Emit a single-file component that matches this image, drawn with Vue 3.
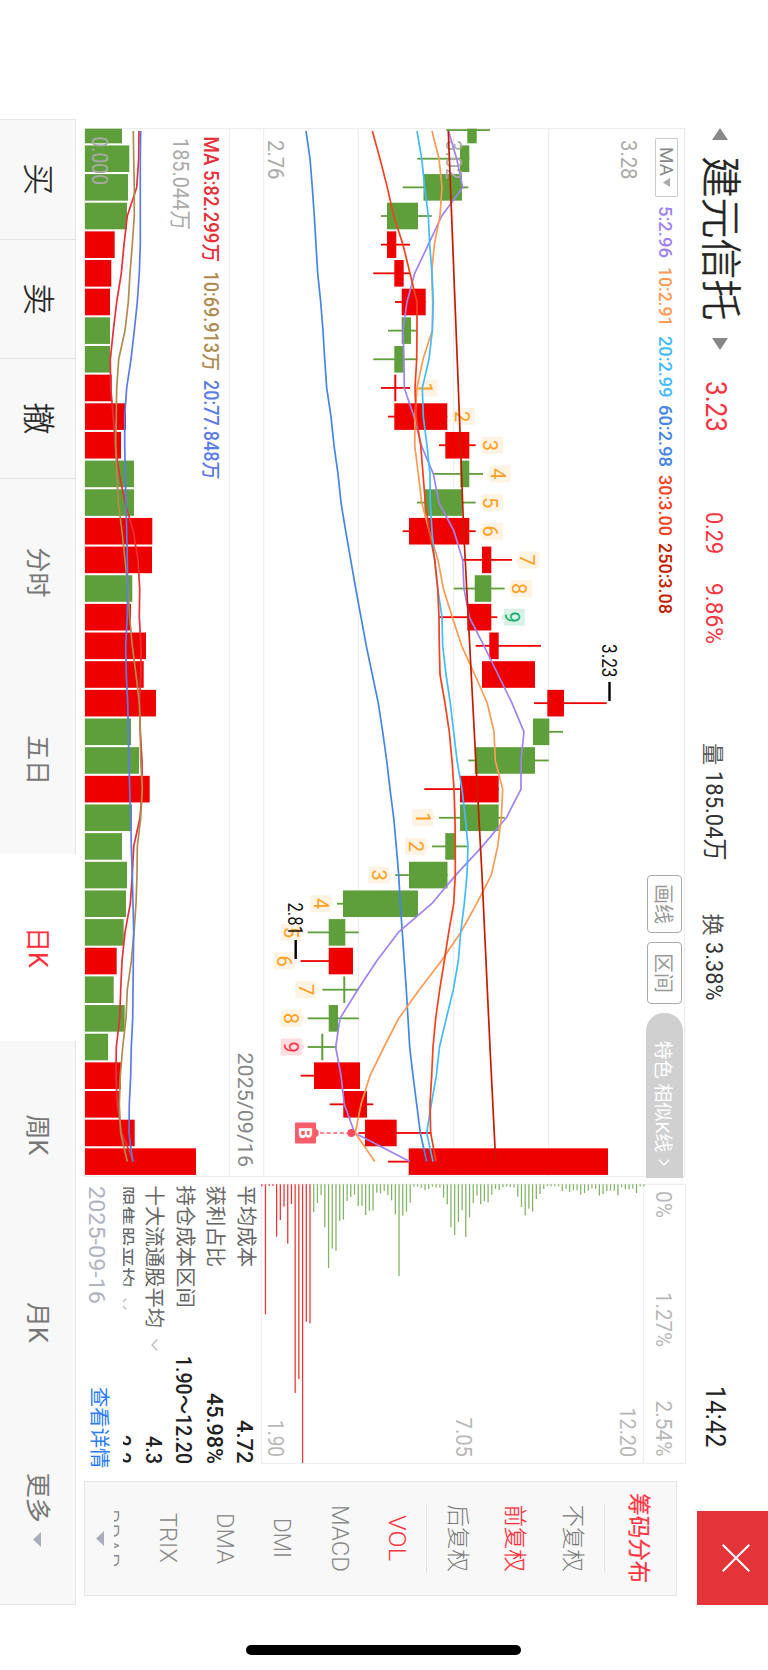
<script setup>
import { h } from 'vue'

// Text squeezed to an exact width; the svg's bottom edge is the text baseline.
const Fit = (p) => {
  const cap = Math.round(p.s * 0.711 * 10) / 10
  return h('svg', { width: p.w, height: cap, class: 'fit', style: { overflow: 'visible', display: 'block', flex: 'none' } }, [
    h('text', {
      x: -1, y: cap, textLength: +p.w + 2, lengthAdjust: 'spacingAndGlyphs',
      'font-size': p.s, 'font-weight': p.b || 400, fill: p.c || '#333',
    }, p.t),
  ])
}
Fit.props = ['t', 'w', 's', 'c', 'b']

const H = 768
const RED = '#ee0000'
const GREEN = '#5f9f3b'
const at = (i) => 130.05 + 28.655 * i

// [colour, low, body bottom, body top, high, volume top]
const raw = [
  ['g', 446.3, 467.3, 476.7, 490, 122], ['g', 417.3, 460, 469.3, 469.3, 129.3], ['g', 402.7, 423.5, 462, 468.3, 128],
  ['g', 381, 387, 418, 431.7, 127], ['r', 381, 387, 396.3, 410, 114.7], ['r', 373.3, 394.3, 403.7, 410, 111.3],
  ['r', 395, 401.7, 425.7, 425.7, 110], ['g', 388, 401.7, 411, 416.7, 110], ['g', 373.3, 394.3, 403.7, 416.7, 110],
  ['r', 381, 394.3, 396.3, 410, 111.7], ['r', 388, 394.3, 447.3, 447.3, 126], ['r', 439, 445.3, 469.3, 475.7, 121],
  ['g', 433, 460.3, 469.3, 483, 134], ['g', 417, 424.3, 462, 475.7, 134], ['r', 402.7, 409, 469.3, 475.7, 152.3],
  ['r', 462, 482, 491.3, 512, 152], ['g', 453.7, 474.7, 491.3, 504.7, 132.3], ['r', 439, 467.3, 491.3, 497.3, 131],
  ['r', 475.7, 489.3, 498.7, 541, 146], ['r', 482, 482, 535, 535, 143.7], ['r', 534, 547.3, 564, 606.7, 156],
  ['g', 533, 533, 549.3, 563, 131], ['g', 468.3, 474.7, 535, 548.7, 139], ['r', 424.3, 460, 498.7, 498.7, 149.7],
  ['g', 439, 460, 498.7, 504.7, 132], ['g', 432, 445.3, 455, 467.3, 122], ['g', 395.3, 409, 447.5, 447.5, 127],
  ['g', 337, 343, 418, 418, 126], ['g', 307.7, 328.7, 345.3, 358.7, 123.7], ['r', 300.7, 328.7, 353, 353, 116.7],
  ['g', 322.3, 343.3, 345.2, 358.7, 113.7], ['g', 307.7, 328.7, 338, 358.7, 124.7], ['g', 307.7, 321.3, 323.3, 336.7, 108],
  ['r', 300.7, 314, 360, 360, 121], ['r', 329.7, 343.3, 367, 373.3, 119.3], ['r', 358.5, 365, 396.7, 431.3, 134.7],
  ['r', 388, 408.7, 608, 608, 196],
]
const candles = raw.map(([k, lo, b0, b1, hi, v], i) => {
  const x0 = Math.max(at(i) - 13.3, 128.7)
  const x1 = at(i) + 13.3
  return { c: k === 'r' ? RED : GREEN, x: at(i), x0, w: x1 - x0, lo: H - lo, hi: H - hi, top: H - b1, bh: b1 - b0, vt: H - v, vh: v - 85 }
})

const poly = (vals) => vals.map((v, i) => `${(i ? at(i) : 131).toFixed(1)},${(H - v).toFixed(1)}`).join(' ')
const ma = [
  { c: '#4485e6', p: poly([306, 310, 312.3, 314.3, 316, 317.7, 320.7, 323, 324.7, 326.7, 331, 334, 338, 341, 345.7, 350.7, 355.7, 361, 366.3, 372.3, 378.3, 382.7, 386.7, 390, 393.7, 396.3, 398.7, 400.3, 402.3, 404.3, 406.3, 408, 409.7, 413, 416.7, 420.3, 426.7]) },
  { c: '#a182f2', p: poly([448.5, 456.7, 462.7, 441.7, 428.3, 414.7, 407, 403, 404, 404.3, 414, 421.3, 433.3, 439, 454, 462.7, 464, 469.3, 484, 498, 512, 524, 521, 521, 506.3, 482.3, 455.7, 431.7, 398.3, 376.7, 357.7, 340, 335.7, 341, 344.3, 354.7, 409.7]) },
  { c: '#ff9a55', p: poly([432, 439, 442, 440, 434.3, 431.7, 432.7, 432.3, 423, 417, 415, 414.7, 418.3, 421.7, 429.3, 438, 443.3, 452.3, 461.7, 474.7, 487.3, 494, 495.3, 502.7, 501.3, 497.7, 491.3, 476.7, 460.7, 441.3, 419.3, 398.7, 384, 370, 361, 355.3, 374.7]) },
  { c: '#42bbff', p: poly([417, 421.7, 424.7, 428.3, 429.7, 432, 433.3, 432.3, 429, 422.3, 423.3, 427, 430, 430.3, 432, 434.7, 437.7, 442, 442.7, 446, 450.3, 453.7, 457, 462, 465.3, 468, 467, 464.3, 460.7, 458.3, 453.3, 446.3, 439.5, 436.3, 431.3, 426.7, 433]) },
  { c: '#f2421f', p: poly([372.3, 380, 387.3, 393.7, 403, 410, 417, 417, 416.7, 415, 416, 420.7, 423, 425.3, 429.3, 434.7, 437.7, 439, 439.3, 440, 445, 449.3, 452, 454, 455, 455.3, 455.3, 453.7, 448.7, 444.3, 439.7, 435.7, 433, 431.7, 430, 430.7, 436]) },
  { c: '#c41c00', p: [[131, 448.3], [387, 458.3], [531, 463.7], [732, 474.3], [875, 482], [1047, 490], [1162, 495.7]].map(([x, v]) => `${x},${H - v}`).join(' ') },
]
const volMa = [
  { c: '#e6303a', p: poly([139, 138.7, 136.7, 127.3, 124, 121.3, 116.7, 113.3, 110.3, 110.7, 113.3, 115.3, 119.3, 125, 133.3, 138, 139.7, 139.3, 141, 140.7, 139.5, 140.3, 142, 142.3, 140, 133.7, 132.3, 130.3, 125, 122, 120.7, 119.7, 116.3, 116, 117.3, 121.7, 133.5]) },
  { c: '#b08b50', p: poly([133.3, 133.7, 134.3, 134.3, 132.3, 130, 128.3, 125, 118.7, 116.7, 116.3, 115.7, 116.7, 118.3, 122, 125, 128, 129.7, 132.3, 136, 139.3, 140.3, 140.7, 142.3, 140.7, 137.3, 137, 136, 134, 131.3, 127.3, 126, 122.7, 120.3, 119.3, 120.7, 127.3]) },
  { c: '#5b7ce6', p: poly([140.7, 140.3, 140.3, 140.3, 140.3, 139.3, 137.3, 134.3, 131, 126.7, 124.7, 124.7, 125.3, 126, 126.7, 127.3, 127.7, 127.3, 125.7, 126.3, 127.7, 128.3, 129, 129.7, 130.7, 131.3, 132.3, 133, 133.7, 133.3, 133, 132.7, 131.3, 130.7, 129.3, 129, 132.7]) },
]

// Nine-count tags: rising run above the candles, falling run below.
const tags = []
for (let n = 1; n <= 9; n++) {
  const u = 8 + n
  const d = 23 + n
  const ut = H - raw[u][4] - 27.5
  const dt = H - raw[d][1] + 6
  const skin = (a, b) => (n === 9 ? { bg: a, fg: b } : { bg: '#fff3e4', fg: '#ffa01e' })
  const x = at(u)
  const z = at(d)
  tags.push({ n, x, y: ut, base: ut + 20, ...skin('#d8f2e8', '#10b06c'), tip: `${x - 4},${ut + 21} ${x + 4},${ut + 21} ${x},${ut + 24}` })
  tags.push({ n, x: z, y: dt, base: dt + 17.4, ...skin('#ffdde0', '#ff3345'), tip: `${z - 4},${dt} ${z + 4},${dt} ${z},${dt - 3}` })
}

const labels = [
  { t: '3.28', x: 141, y: 146.8, w: 37.5, s: 22, c: '#aaa' },
  { t: '3.02', x: 141, y: 322.3, w: 37.5, s: 21.5, c: '#aaa' },
  { t: '2.76', x: 141, y: 499.8, w: 37.5, s: 21.5, c: '#aaa' },
  { t: '185.044万', x: 139, y: 595.3, w: 90, s: 21.5, c: '#aaa' },
  { t: '0.000', x: 137.5, y: 676.3, w: 46.5, s: 21.5, c: '#aaa' },
  { t: 'MA 5:82.299万', x: 137.5, y: 563.7, w: 123.5, s: 19.8, c: '#e6303a', b: 500 },
  { t: '10:69.913万', x: 272.5, y: 563.7, w: 97.5, s: 19.8, c: '#b08b50', b: 500 },
  { t: '20:77.848万', x: 381, y: 563.7, w: 97.5, s: 19.8, c: '#5b7ce6', b: 500 },
  { t: '2025/09/16', x: 1053.5, y: 529.7, w: 112.5, s: 20.6, c: '#888' },
]
const extremes = [
  { t: '3.23', x: 645, y: 165.8, w: 31.5, s: 20, l: [682, 701, 158.5] },
  { t: '2.81', x: 903.5, y: 480.5, w: 30.5, s: 20, l: [940, 959, 472.3] },
]
const legend = [
  { t: '5:2.96', w: 50, m: 9.5, c: '#a182f2' }, { t: '10:2.91', w: 57.5, m: 11.5, c: '#ff9a55' },
  { t: '20:2.99', w: 59.5, m: 11, c: '#42bbff' }, { t: '60:2.98', w: 60, m: 10, c: '#4485e6' },
  { t: '30:3.00', w: 59, m: 9.5, c: '#f2421f' }, { t: '250:3.08', w: 69, m: 9.5, c: '#c41c00' },
]

const lens = [6, 390, 5, 5, 157, 107, 67, 178, 59, 626, 584, 836, 412, 417, 84, 56, 32, 129, 251, 193, 199, 110, 106, 50, 38, 31, 65, 65, 92, 79, 79, 25, 27, 19, 32, 48, 90, 275, 94, 82, 55, 7, 7, 10, 17, 14, 7, 10, 10, 40, 60, 129, 152, 113, 77, 158, 99, 56, 34, 60, 51, 54, 31, 14, 17, 9, 7, 8, 10, 37, 68, 93, 73, 82, 44, 29, 14, 6, 6, 6, 6, 20, 14, 23, 18, 18, 31, 26, 19, 13, 14, 34, 29, 20, 19, 19, 33, 9, 15, 15, 13, 26, 6, 6]
const chips = lens.map((n, k) => ({ y: H - 261.8 - 3.71 * k - 0.6, w: n / 3, c: k < 14 ? '#ef3035' : '#80b363' }))
const chipLabels = [
  { t: '0%', x: 1192, y: 112, w: 25, s: 22.3 }, { t: '1.27%', x: 1293, y: 112, w: 53, s: 22.3 }, { t: '2.54%', x: 1401.5, y: 112, w: 54, s: 22.3 },
  { t: '12.20', x: 1408.5, y: 148, w: 47.5, s: 22 }, { t: '7.05', x: 1418.5, y: 311.7, w: 37.5, s: 22 }, { t: '1.90', x: 1421, y: 499.7, w: 35, s: 22 },
]
const info = [
  { k: '平均成本', v: '4.72', w: 41.5 }, { k: '获利占比', v: '45.98%', w: 69 },
  { k: '持仓成本区间', v: '1.90～12.20', w: 106 }, { k: '十大流通股平均', v: '4.3', w: 26, more: true },
  { k: '限售股平均', v: '2.2', w: 27, more: true },
]
const adjust = [{ t: '不复权' }, { t: '前复权', on: true }, { t: '后复权' }]
const indicators = [
  { t: 'VOL', on: true, w: 44 }, { t: 'MACD', w: 65 }, { t: 'DMI', w: 38 }, { t: 'DMA', w: 49 }, { t: 'TRIX', w: 48 }, { t: 'BRAR', w: 57 },
]
const trades = ['买', '卖', '撤']
const tabs = [{ t: '分时' }, { t: '五日' }, { t: '日K', on: true }, { t: '周K' }, { t: '月K' }, { t: '更多', more: true }]
</script>

<template>
  <div class="stage">
    <div class="screen">
      <header class="top">
        <svg class="arrow" width="12" height="16" viewBox="0 0 12 16"><path d="M12 0V16L0 8Z" fill="#888" /></svg>
        <h1 class="name">建元信托</h1>
        <svg class="arrow" width="12" height="16" viewBox="0 0 12 16"><path d="M0 0V16L12 8Z" fill="#888" /></svg>
        <div class="quote">
          <Fit class="price" t="3.23" w="49" s="29.8" c="#f93440" />
          <Fit class="chg" t="0.29" w="40" s="24" c="#f93440" />
          <Fit class="pct" t="9.86%" w="59" s="24" c="#f93440" />
          <span class="cap vol">量</span>
          <Fit class="num" t="185.04万" w="87.5" s="24.6" />
          <span class="cap turn">换</span>
          <Fit class="num" t="3.38%" w="56.5" s="24.6" />
          <Fit class="clock" t="14:42" w="59.5" s="27" c="#222" />
        </div>
        <button class="close">
          <svg width="28" height="28" viewBox="0 0 28 28"><path d="M.7.7 27.3 27.3M27.3.7.7 27.3" stroke="#fff" stroke-width="2" /></svg>
        </button>
      </header>

      <main class="main">
        <section class="chart">
          <svg class="plot" width="1050" height="602" viewBox="128 82 1050 602">
            <g stroke="#ebebeb" stroke-width="1">
              <path d="M129 83.3H1177M129 219.3H1177M129 314.3H1177M129 409.7H1177M129 504.3H1177M129 538.7H1177M129 683.5H1177M128.7 83V684M1176.5 83V684" />
            </g>
            <g v-for="(k, i) in candles" :key="i" :fill="k.c">
              <rect :x="k.x - 0.9" :y="k.hi" width="1.8" :height="k.lo - k.hi" />
              <rect :x="k.x0" :y="k.top" :width="k.w" :height="k.bh" />
              <rect :x="k.x0" :y="k.vt" :width="k.w" :height="k.vh" />
            </g>
            <g v-for="(g, i) in tags" :key="'t' + i">
              <rect :x="g.x - 8.5" :y="g.y" width="17" height="21" rx="1" :fill="g.bg" />
              <polygon :points="g.tip" :fill="g.bg" />
              <text :x="g.x" :y="g.base" text-anchor="middle" font-size="20" :fill="g.fg">{{ g.n }}</text>
            </g>
            <text v-for="l in labels" :key="l.t" :x="l.x - 1" :y="l.y" :textLength="l.w + 2" lengthAdjust="spacingAndGlyphs" :font-size="l.s" :font-weight="l.b || 400" :fill="l.c">{{ l.t }}</text>
            <g fill="none" stroke-width="1.7" stroke-linejoin="round">
              <polyline v-for="m in ma" :key="m.c" :points="m.p" :stroke="m.c" />
              <polyline v-for="m in volMa" :key="m.c" :points="m.p" :stroke="m.c" />
            </g>
            <g v-for="e in extremes" :key="e.t">
              <text :x="e.x - 1" :y="e.y" :textLength="e.w + 2" lengthAdjust="spacingAndGlyphs" :font-size="e.s" fill="#111">{{ e.t }}</text>
              <line :x1="e.l[0]" :x2="e.l[1]" :y1="e.l[2]" :y2="e.l[2]" stroke="#000" stroke-width="2.4" />
            </g>
            <g>
              <line x1="1133" x2="1133" y1="448" y2="420" stroke="#fa5d6a" stroke-width="1.6" stroke-dasharray="4 2.6" />
              <circle cx="1133" cy="416.7" r="4" fill="#fa4d5e" />
              <rect x="1122.5" y="452" width="21" height="21" rx="1" fill="#fa5d6a" />
              <path d="M1128 452.500L1131 449.400H1135L1138 452.500Z" fill="#fa5d6a" />
              <text x="1133" y="469.5" text-anchor="middle" font-size="18.5" font-weight="700" fill="#fff">B</text>
            </g>
          </svg>
          <div class="legend">
            <span class="pick">
              <Fit t="MA" w="27" s="18.8" c="#888" />
              <svg width="9" height="7" viewBox="0 0 9 7"><path d="M0 0H9L4.500 7Z" fill="#aaa" /></svg>
            </span>
            <Fit v-for="l in legend" :key="l.t" :t="l.t" :w="l.w" s="19.2" :c="l.c" b="500" :style="{ marginLeft: l.m + 'px' }" />
          </div>
          <div class="tools">
            <button class="tool">画线</button>
            <button class="tool wide">区间</button>
            <button class="pill">
              <span>特色 相似K线</span>
              <svg width="7" height="12" viewBox="0 0 7 12"><path d="M.8.8 6 6 .8 11.2" fill="none" stroke="#fff" stroke-width="1.4" /></svg>
            </button>
          </div>
        </section>

        <section class="chips">
          <svg class="plot" width="282" height="426" viewBox="1183 82 282 426">
            <path d="M1184.3 82.5H1463.3V506.7H1184.3ZM1184.3 124.3H1463.3" fill="none" stroke="#ebebeb" />
            <rect v-for="(b, i) in chips" :key="i" x="1184.3" :y="b.y" :width="b.w" height="1.25" :fill="b.c" />
            <text v-for="l in chipLabels" :key="l.t" :x="l.x - 1" :y="l.y" :textLength="l.w + 2" lengthAdjust="spacingAndGlyphs" :font-size="l.s" fill="#b8b8b8">{{ l.t }}</text>
          </svg>
          <div class="list">
            <div v-for="r in info" :key="r.k" class="row">
              <span class="key">{{ r.k }}</span>
              <svg v-if="r.more" class="chev" width="12" height="7" viewBox="0 0 12 7"><path d="M.5.7 6 6 11.5.7" fill="none" stroke="#bbb" stroke-width="1.2" /></svg>
              <Fit class="val" :t="r.v" :w="r.w" s="21.5" c="#222" b="500" />
            </div>
          </div>
          <div class="foot">
            <Fit class="date" t="2025-09-16" w="116" s="21.5" c="#b0b4c2" />
            <a class="detail">查看详情</a>
          </div>
        </section>

        <aside class="side">
          <div class="head">筹码分布</div>
          <div class="group">
            <div v-for="a in adjust" :key="a.t" class="opt" :class="{ on: a.on }">{{ a.t }}</div>
          </div>
          <div class="inds">
            <div v-for="a in indicators" :key="a.t" class="opt">
              <Fit :t="a.t" :w="a.w" s="23.5" b="300" :c="a.on ? '#ff3340' : '#888'" />
            </div>
          </div>
          <svg class="down" width="15" height="8" viewBox="0 0 15 8"><path d="M0 0H15L7.500 8Z" fill="#a9afba" /></svg>
        </aside>
      </main>

      <nav class="tabs">
        <div v-for="t in trades" :key="t" class="trade">{{ t }}</div>
        <div v-for="t in tabs" :key="t.t" class="tab" :class="{ on: t.on }">
          {{ t.t }}
          <svg v-if="t.more" class="caret" width="15" height="8" viewBox="0 0 15 8"><path d="M0 0H15L7.500 8Z" fill="#a9afba" /></svg>
        </div>
      </nav>
      <i class="home"></i>
    </div>
  </div>
</template>

<style>
html, body { background: #fff; }
</style>

<style scoped>
.stage { width: 768px; height: 1670px; overflow: hidden; background: #fff; }
.screen {
  position: relative; width: 1670px; height: 768px; display: flex; flex-direction: column;
  transform-origin: 0 0; transform: translateX(768px) rotate(90deg);
  font-family: Roboto, "Noto Sans CJK SC", sans-serif; color: #333;
}
button { font: inherit; border: 0; padding: 0; background: none; display: flex; align-items: center; justify-content: center; box-sizing: border-box; }
.top { height: 82px; flex: none; display: flex; align-items: flex-start; padding-left: 128px; }
.arrow { margin-top: 40px; flex: none; }
.name { margin: 18px 17px 0 16.500px; width: 164.500px; font-size: 41px; line-height: 60px; font-weight: 300; -webkit-text-stroke: 0.600px #222; white-space: nowrap; color: #222; }
.quote { display: flex; align-items: baseline; height: 65px; padding-left: 32px; margin-top: 33.500px; }
.chg { margin-left: 82px; margin-bottom: -4px; }
.pct { margin-left: 31px; margin-bottom: -4px; }
.cap { font-size: 22px; line-height: 44px; color: #555; width: 22px; }
.vol { margin-left: 100px; }
.turn { margin-left: 54px; }
.num { margin-left: 7px; }
.clock { margin-left: 388px; margin-bottom: -3px; }
.close { width: 93.700px; height: 71px; padding-bottom: 7px; background: #e33538; position: absolute; left: 1511px; top: 0; }
.main { flex: none; height: 610px; display: flex; padding-left: 128px; }
.plot { display: block; }
.chart { position: relative; width: 1050px; }
.legend { position: absolute; left: 10px; top: 8px; height: 23px; display: flex; align-items: center; }
.pick { width: 59px; height: 23px; box-sizing: border-box; border: 1px solid #ccc; border-radius: 1px; display: flex; align-items: center; justify-content: center; gap: 3px; }
.tools { position: absolute; right: 0; top: 3px; height: 37px; display: flex; align-items: center; }
.tool { width: 58px; height: 35px; border: 1px solid #aaa; border-radius: 4px; background: #fff; color: #999; font-size: 20px; margin-right: 9px; }
.tool.wide { width: 62px; }
.pill { width: 165px; height: 37px; background: #d0d0d0; border-radius: 18px 0 0 18px; color: #fff; font-size: 19px; gap: 7px; padding-left: 16px; white-space: nowrap; }
.chips { width: 282px; margin-left: 5px; display: flex; flex-direction: column; }
.list { margin-top: -0.500px; height: 137.800px; overflow: hidden; padding: 0 2.500px 0 2.500px; }
.row { height: 30.500px; display: flex; align-items: center; }
.key { font-size: 20.400px; line-height: 30px; color: #666; white-space: nowrap; margin-top: -1px; }
.chev { margin: 0 0 1px 11px; }
.val { margin-left: auto; margin-top: 1px; }
.foot { height: 44px; display: flex; align-items: center; justify-content: space-between; padding: 0 0 0 3.500px; margin-right: -3.500px; }
.date { margin-top: 8px; }
.detail { font-size: 20.400px; color: #2b7bff; }
.side { margin: 8.500px 0 0 16px; width: 114.500px; height: 593.500px; box-sizing: border-box; border: 1px solid #e6e6e6; background: #f8f8f8; display: flex; flex-direction: column; align-items: center; }
.head { height: 71px; line-height: 75px; font-size: 22.600px; font-weight: 400; -webkit-text-stroke: 0.200px #ff3340; color: #ff3340; flex: none; }
.group { width: 69px; box-sizing: border-box; height: 179px; padding: 1px 0; border: solid #e6e6e6; border-width: 1px 0; flex: none; }
.opt { height: 57.400px; display: flex; align-items: center; justify-content: center; font-size: 22.300px; color: #888; white-space: nowrap; }
.group .opt { font-weight: 300; color: #777; }
.group .opt.on { color: #ff2835; -webkit-text-stroke: 0.200px #ff2835; }
.inds { height: 312px; overflow: hidden; flex: none; }
.down { margin-top: 10.500px; flex: none; }
.tabs { flex: none; height: 76px; width: 1485.500px; margin-left: 119px; display: flex; border-left: 1px solid #e6e6e6; border-right: 1px solid #e6e6e6; box-sizing: border-box; }
.trade, .tab { box-sizing: border-box; height: 76px; border-top: 1.500px solid #e4e4e4; background: #f8f8f8; display: flex; align-items: center; justify-content: center; }
.trade { width: 119.600px; border-right: 1px solid #e2e2e2; font-size: 32px; font-weight: 300; -webkit-text-stroke: 0.300px #222; color: #222; padding-bottom: 8px; }
.tab { flex: 1; font-size: 25px; color: #777; gap: 9px; padding-bottom: 6px; }
.tab.on { background: #fff; border-top-color: #fff; color: #ff2f3c; }
.caret { margin-top: 6px; }
.home { position: absolute; left: 1645px; top: 246.500px; width: 10px; height: 275px; border-radius: 5px; background: #000; }
</style>
